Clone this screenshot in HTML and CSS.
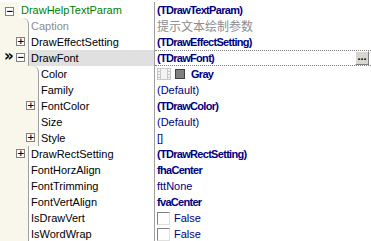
FILE: index.html
```html
<!DOCTYPE html>
<html lang="zh">
<head>
  <meta charset="UTF-8">
  <title>Object Inspector</title>
  <link rel="stylesheet" href="styles.css">
</head>
<body>

  <div class="grid">
    <div class="row lv0">
      <div class="gutter"><span class="box">−</span></div>
      <div class="name green">DrawHelpTextParam</div>
      <div class="value bold">(TDrawTextParam)</div>
    </div>
    <div class="row lv1 first">
      <div class="gutter"></div>
      <div class="name grey">Caption</div>
      <div class="value cjk">提示文本绘制参数</div>
    </div>
    <div class="row lv1">
      <div class="gutter"><span class="box">+</span></div>
      <div class="name">DrawEffectSetting</div>
      <div class="value bold">(TDrawEffectSetting)</div>
    </div>
    <div class="row lv1 selected">
      <div class="gutter"><span class="arrow">»</span><span class="box">−</span></div>
      <div class="name">DrawFont</div>
      <div class="value bold focus">(TDrawFont)<span class="ellipsis">...</span></div>
    </div>
    <div class="row lv2 first">
      <div class="gutter"></div>
      <div class="name">Color</div>
      <div class="value bold">
        <svg class="strip" width="14" height="12" viewBox="0 0 14 12">
          <rect x="0.5" y="0.5" width="13" height="11" fill="#f4f4f4" stroke="#c8c8c8"/>
          <line x1="3.5" y1="0" x2="3.5" y2="12" stroke="#c8c8c8"/>
          <line x1="10.5" y1="0" x2="10.5" y2="12" stroke="#c8c8c8"/>
          <line x1="0" y1="3.5" x2="3" y2="3.5" stroke="#c8c8c8"/>
          <line x1="0" y1="6.5" x2="3" y2="6.5" stroke="#c8c8c8"/>
          <line x1="0" y1="9.5" x2="3" y2="9.5" stroke="#c8c8c8"/>
          <line x1="11" y1="3.5" x2="14" y2="3.5" stroke="#c8c8c8"/>
          <line x1="11" y1="6.5" x2="14" y2="6.5" stroke="#c8c8c8"/>
          <line x1="11" y1="9.5" x2="14" y2="9.5" stroke="#c8c8c8"/>
        </svg>
        <span class="swatch"></span>Gray
      </div>
    </div>
    <div class="row lv2">
      <div class="gutter"></div>
      <div class="name">Family</div>
      <div class="value">(Default)</div>
    </div>
    <div class="row lv2">
      <div class="gutter"><span class="box">+</span></div>
      <div class="name">FontColor</div>
      <div class="value bold">(TDrawColor)</div>
    </div>
    <div class="row lv2">
      <div class="gutter"></div>
      <div class="name">Size</div>
      <div class="value">(Default)</div>
    </div>
    <div class="row lv2">
      <div class="gutter"><span class="box">+</span></div>
      <div class="name">Style</div>
      <div class="value">[]</div>
    </div>
    <div class="row lv1">
      <div class="gutter"><span class="box">+</span></div>
      <div class="name">DrawRectSetting</div>
      <div class="value bold">(TDrawRectSetting)</div>
    </div>
    <div class="row lv1">
      <div class="gutter"></div>
      <div class="name">FontHorzAlign</div>
      <div class="value bold">fhaCenter</div>
    </div>
    <div class="row lv1">
      <div class="gutter"></div>
      <div class="name">FontTrimming</div>
      <div class="value">fttNone</div>
    </div>
    <div class="row lv1">
      <div class="gutter"></div>
      <div class="name">FontVertAlign</div>
      <div class="value bold">fvaCenter</div>
    </div>
    <div class="row lv1">
      <div class="gutter"></div>
      <div class="name">IsDrawVert</div>
      <div class="value"><span class="check"></span>False</div>
    </div>
    <div class="row lv1">
      <div class="gutter"></div>
      <div class="name">IsWordWrap</div>
      <div class="value"><span class="check"></span>False</div>
    </div>
  </div>

</body>
</html>
```

FILE: styles.css
```css
body {
  margin: 0;
  padding-top: 2px;
  background: #fff;
  font-family: Tahoma, "Liberation Sans", Arial, sans-serif;
  font-size: 11px;
  color: #000;
}

.grid {
  width: 371px;
}

.row {
  display: flex;
  height: 16px;
  line-height: 16px;
}

.gutter {
  position: relative;
  flex: none;
  background: #f9f7ec;
  box-sizing: border-box;
}

.lv0 .gutter { width: 19px; }
.lv1 .gutter { width: 29px; border-right: 1px solid #a0a0a0; }
.lv2 .gutter { width: 39px; border-right: 1px solid #a0a0a0; }

.first .gutter {
  border-top-right-radius: 6px;
}

.box {
  position: absolute;
  top: 3px;
  width: 9px;
  height: 9px;
  box-sizing: border-box;
  border: 1px solid #808080;
  background: #fff;
  font-family: "DejaVu Sans", sans-serif;
  font-size: 9px;
  font-weight: bold;
  line-height: 6px;
  text-align: center;
}

.lv0 .box { left: 5px; top: 5px; }
.lv1 .box { left: 16px; }
.lv2 .box { left: 26px; }

.arrow {
  position: absolute;
  left: 4px;
  top: -2px;
  font-family: "DejaVu Sans", sans-serif;
  font-weight: bold;
  font-size: 15px;
}

.name {
  width: 0;
  flex: 1;
  padding-left: 2px;
  white-space: nowrap;
  overflow: hidden;
  border-right: 1px solid #a0a0a0;
}

.value {
  position: relative;
  flex: none;
  width: 216px;
  box-sizing: border-box;
  padding-left: 2px;
  color: #000080;
  white-space: nowrap;
  overflow: hidden;
  display: flex;
  align-items: center;
}

.bold {
  font-weight: bold;
  letter-spacing: -0.7px;
}

.green { color: #008000; }
.grey { color: #8c8c8c; }

.cjk {
  font-family: "Noto Sans CJK SC", sans-serif;
  font-size: 12px;
  color: #8c8c8c;
}

.selected .name { background: #e0e0e0; }

.focus {
  border-top: 1px dotted #808080;
  border-bottom: 1px dotted #808080;
}

.ellipsis {
  position: absolute;
  right: 2px;
  top: 0;
  width: 14px;
  height: 14px;
  box-sizing: border-box;
  background: #d8d6d0;
  border: 1px solid;
  border-color: #fff #808080 #808080 #fff;
  color: #000;
  font-size: 11px;
  letter-spacing: 0;
  line-height: 8px;
  text-align: center;
}

.strip {
  margin-right: 4px;
}

.swatch {
  width: 10px;
  height: 10px;
  box-sizing: border-box;
  background: #808080;
  border: 1px solid #404040;
  margin-right: 6px;
}

.check {
  width: 13px;
  height: 13px;
  box-sizing: border-box;
  border: 1px solid;
  border-color: #808080 #e0e0e0 #e0e0e0 #808080;
  background: #fff;
  margin-right: 4px;
}
```
